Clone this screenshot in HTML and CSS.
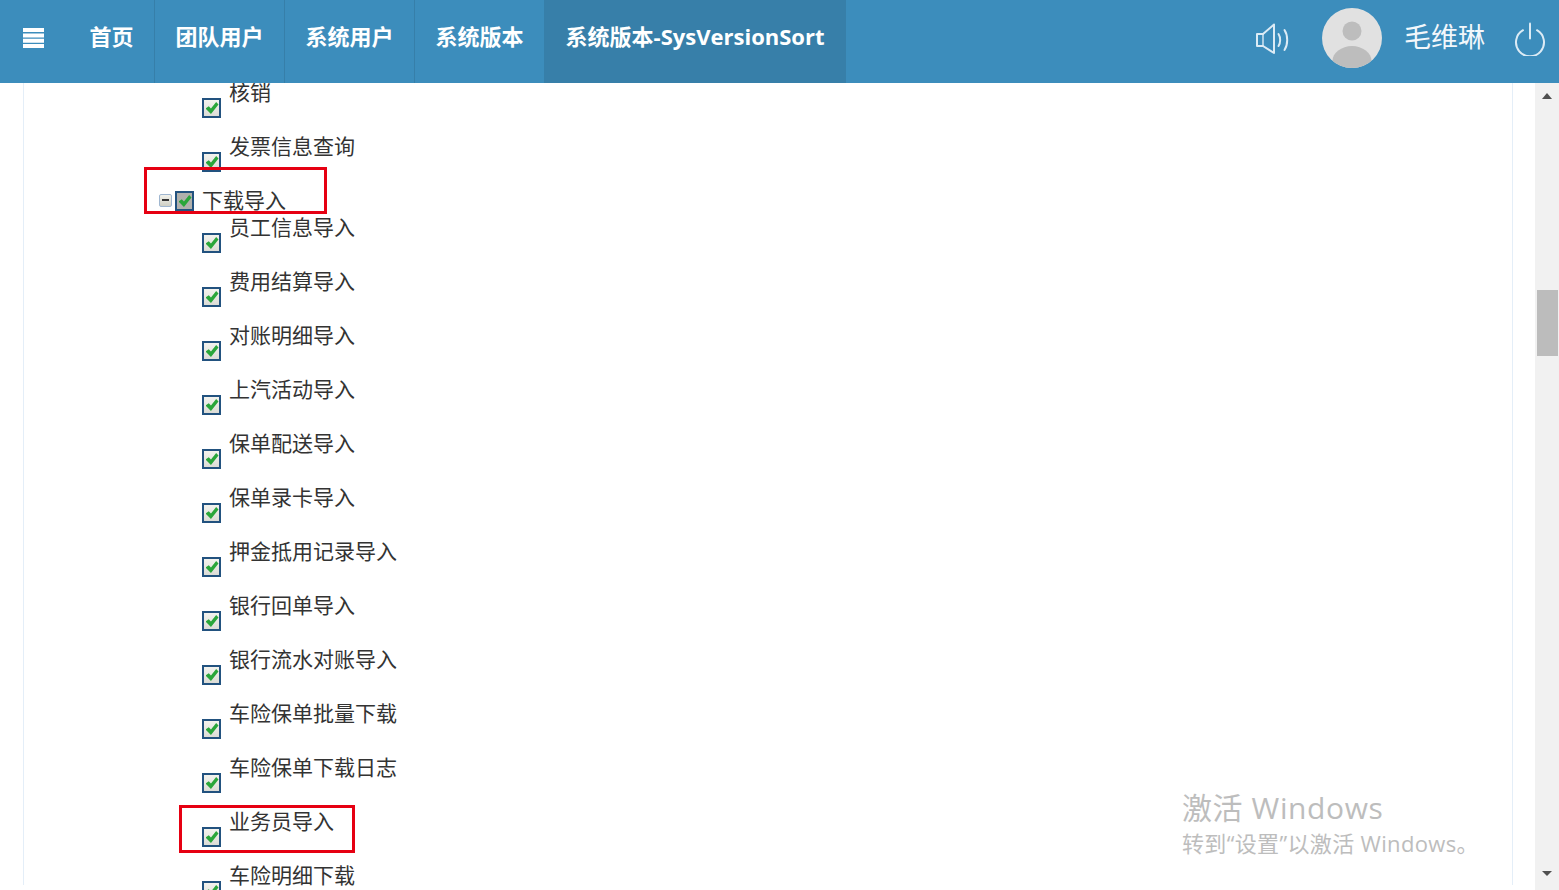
FILE: index.html
```html
<!DOCTYPE html>
<html lang="zh-CN">
<head>
<meta charset="utf-8">
<title>系统版本-SysVersionSort</title>
<link rel="stylesheet" href="styles.css">
</head>
<body>
<header class="topbar">
  <button class="menu-toggle" aria-label="menu">
    <svg width="21" height="20" viewBox="0 0 21 20"><path d="M0 0h21v4H0zM0 5.400h21v4H0zM0 10.700h21v4H0zM0 16h21v4H0z" fill="#fff"/></svg>
  </button>
  <nav class="tabs">
    <a class="tab">首页</a>
    <a class="tab">团队用户</a>
    <a class="tab">系统用户</a>
    <a class="tab">系统版本</a>
    <a class="tab active">系统版本-SysVersionSort</a>
  </nav>
  <div class="tools">
    <svg class="sound" width="36" height="34" viewBox="0 0 36 34" fill="none" stroke="#dcebf5" stroke-width="2" stroke-linejoin="round" stroke-linecap="round"><path d="M2 12h6L19 2.500V31L8 24H2z"/><path d="M8 12v12" stroke-width="1.400"/><path d="M23.500 12c2.200 3.400 2.200 8.600 0 12"/><path d="M29.500 8c3.600 5.400 3.600 14.600 0 20"/></svg>
    <svg class="avatar" width="60" height="60" viewBox="0 0 60 60"><defs><clipPath id="av"><circle cx="30" cy="30" r="30"/></clipPath></defs><circle cx="30" cy="30" r="30" fill="#e1e1e1"/><g clip-path="url(#av)" fill="#bdbdbd"><circle cx="30" cy="23" r="9.500"/><ellipse cx="30" cy="53" rx="19.500" ry="15"/></g></svg>
    <span class="username">毛维琳</span>
    <svg class="power" width="32" height="34" viewBox="0 0 32 34" fill="none" stroke="#dcebf5" stroke-width="2" stroke-linecap="round"><path d="M16 1.500v15"/><path d="M9 8.200a14 14 0 1 0 14 0"/></svg>
  </div>
</header>
<div class="body-wrap">
  <main class="content">
    <div class="panel">
      <ul class="tree">
        <li class="leaf"><i class="check"></i><span>核销</span></li>
        <li class="leaf"><i class="check"></i><span>发票信息查询</span></li>
        <li class="branch"><i class="toggle"></i><i class="check partial"></i><span>下载导入</span></li>
        <li class="leaf"><i class="check"></i><span>员工信息导入</span></li>
        <li class="leaf"><i class="check"></i><span>费用结算导入</span></li>
        <li class="leaf"><i class="check"></i><span>对账明细导入</span></li>
        <li class="leaf"><i class="check"></i><span>上汽活动导入</span></li>
        <li class="leaf"><i class="check"></i><span>保单配送导入</span></li>
        <li class="leaf"><i class="check"></i><span>保单录卡导入</span></li>
        <li class="leaf"><i class="check"></i><span>押金抵用记录导入</span></li>
        <li class="leaf"><i class="check"></i><span>银行回单导入</span></li>
        <li class="leaf"><i class="check"></i><span>银行流水对账导入</span></li>
        <li class="leaf"><i class="check"></i><span>车险保单批量下载</span></li>
        <li class="leaf"><i class="check"></i><span>车险保单下载日志</span></li>
        <li class="leaf"><i class="check"></i><span>业务员导入</span></li>
        <li class="leaf"><i class="check"></i><span>车险明细下载</span></li>
      </ul>
    </div>
    <div class="mark mark-a"></div>
    <div class="mark mark-b"></div>
    <div class="watermark">
      <div class="wm-title">激活 Windows</div>
      <div class="wm-sub">转到“设置”以激活 Windows。</div>
    </div>
  </main>
  <aside class="scrollbar">
    <div class="arrow up"></div>
    <div class="track"><div class="thumb"></div></div>
    <div class="arrow down"></div>
  </aside>
</div>
</body>
</html>
```
FILE: styles.css
```css
* { box-sizing: border-box; }
html, body { height: 100%; }
body {
  margin: 0;
  display: flex;
  flex-direction: column;
  overflow: hidden;
  background: #fff;
  color: #333;
  font-family: "Noto Sans CJK SC", "Open Sans", sans-serif;
}
.topbar {
  flex: 0 0 83px;
  display: flex;
  align-items: stretch;
  background: #3c8dbc;
  color: #fff;
}
.menu-toggle {
  flex: 0 0 69px;
  display: flex;
  align-items: center;
  padding: 0 0 8px 23px;
  border: 0;
  background: none;
}
.menu-toggle svg { display: block; }
.tabs { display: flex; }
.tab {
  display: flex;
  align-items: center;
  padding: 0 20.5px 14px;
  border-right: 1px solid #367fa9;
  font-family: "Open Sans", "Noto Sans CJK SC", sans-serif;
  font-size: 22px;
  font-weight: 700;
  white-space: nowrap;
}
.tab.active { background: #377fa9; border-right-color: #377fa9; }
.tools {
  margin-left: auto;
  display: flex;
  align-items: center;
  padding-bottom: 8px;
}
.sound { margin-right: 31px; margin-top: 2px; }
.username { margin: 0 29px 4px 22px; font-size: 27px; font-weight: 400; color: #f2f7fb; line-height: 1; }
.avatar { display: block; }
.power { margin-right: 13px; margin-top: 3px; }

.body-wrap { flex: 1; min-height: 0; display: flex; }
.content { flex: 1; min-width: 0; position: relative; overflow: hidden; padding: 0 22px 0 23px; }
.panel {
  height: 100%;
  border-left: 1px solid #e4eef8;
  border-right: 1px solid #e4eef8;
}
.tree { list-style: none; margin: -5px 0 0; padding: 0; }
.tree li { display: flex; font-size: 21px; line-height: 30px; white-space: nowrap; }
.tree span { margin-top: -2px; }
.leaf { height: 54px; padding-left: 178px; }
.branch { height: 27px; padding-left: 135px; }
.check {
  flex: none;
  width: 19px;
  height: 20px;
  margin-right: 8px;
  border: 2px solid #22527f;
  background: linear-gradient(#f3f3ee, #dcdcd6);
  position: relative;
}
.leaf .check { margin-top: 20px; }
.branch .check { margin-top: 5px; background: #b0b0ac; }
.check::after {
  content: "";
  position: absolute;
  left: 1.5px;
  top: 2px;
  width: 13px;
  height: 12px;
  background: #2aa63a;
  clip-path: polygon(0 55%, 25% 35%, 42% 55%, 82% 0, 100% 20%, 42% 100%);
}
.toggle {
  flex: none;
  width: 13px;
  height: 13px;
  margin: 8px 3px 0 0;
  border: 1px solid #9fb6d0;
  border-radius: 2px;
  background: linear-gradient(#f2f2ec, #cfcfc4);
  position: relative;
}
.toggle::after {
  content: "";
  position: absolute;
  left: 2px;
  right: 2px;
  top: 4px;
  height: 2px;
  background: #333;
}
.mark { position: absolute; border: 3px solid #e60012; }
.mark-a { left: 144px; top: 84px; width: 183px; height: 47px; }
.mark-b { left: 179px; top: 722px; width: 176px; height: 48px; }
.watermark {
  position: absolute;
  left: 1182px;
  top: 705px;
  color: #bdbdbd;
  font-family: "Open Sans", "Noto Sans CJK SC", sans-serif;
  white-space: nowrap;
}
.wm-title { font-size: 30px; line-height: 40px; letter-spacing: .6px; }
.wm-sub { font-size: 22px; line-height: 30px; letter-spacing: .35px; }

.scrollbar {
  flex: 0 0 24px;
  display: flex;
  flex-direction: column;
  align-items: center;
  background: #f1f1f1;
}
.arrow { flex: none; width: 0; height: 0; border-left: 5.5px solid transparent; border-right: 5.5px solid transparent; }
.arrow.up { margin-top: 10px; border-bottom: 6px solid #505050; }
.arrow.down { margin-bottom: 14px; border-top: 5px solid #505050; }
.track { flex: 1; width: 100%; padding: 191px 1px 0 2px; }
.thumb { height: 66px; background: #bcbcbc; }
```
